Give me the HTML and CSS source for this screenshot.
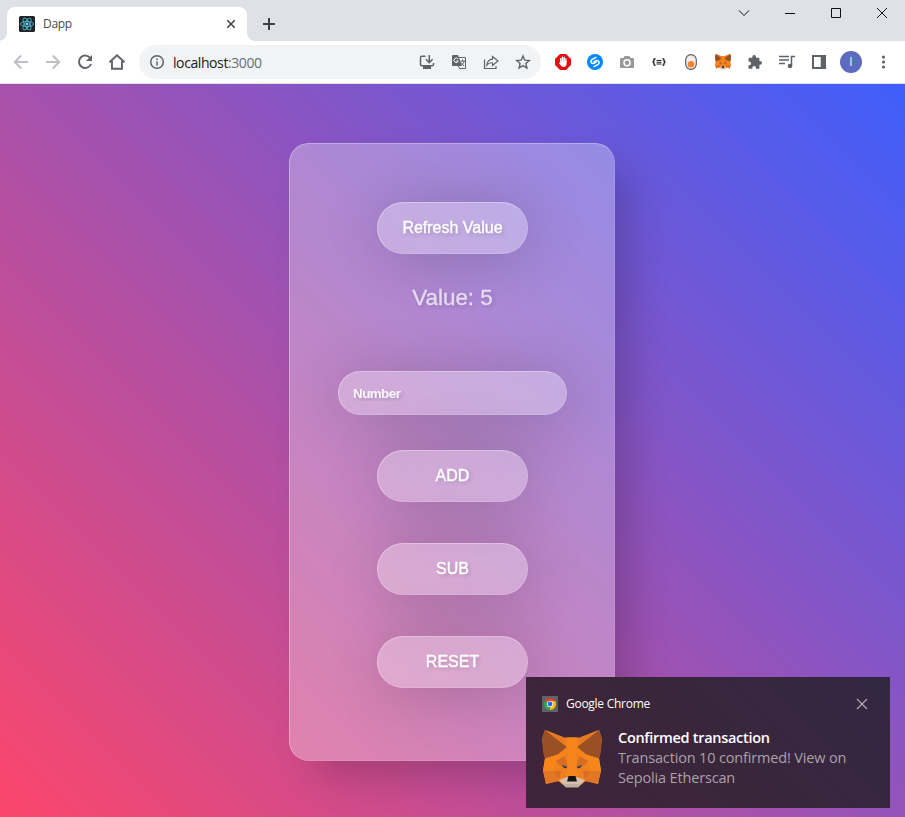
FILE: index.html
```html
<!DOCTYPE html>
<html lang="en">
<head>
<meta charset="utf-8">
<title>Dapp</title>
<link rel="stylesheet" href="styles.css">
</head>
<body>
<svg class="defs" width="0" height="0" aria-hidden="true">
  <symbol id="fox" viewBox="0 0 60 58">
    <path fill="#f0801f" d="M3 0 22 7.500H38L57 0 60 9 57 29 59 40 56 54 44 51 36 57H24L16 51 4 54 1 40 3 29 0 9Z"/>
    <path fill="#995024" d="M3 0 25 17 16 24.500 3 28.500 1 22 0 9ZM57 0 35 17 44 24.500 57 28.500 59 22 60 9Z"/>
    <path fill="#e67a22" d="M3 0 22 7.500 25 17ZM57 0 38 7.500 35 17Z"/>
    <path fill="#f6851b" d="M3 28.500 16 24.500 25 17 24 30 14 31 12 41H1ZM57 28.500 44 24.500 35 17 36 30 46 31 48 41H59Z"/>
    <path fill="#e27625" d="M1 41H12L17 51 4 54ZM59 41H48L43 51 56 54Z"/>
    <path fill="#d96b23" d="M13.500 31 23 26 26 38 18 35ZM46.500 31 37 26 34 38 42 35ZM12 41H19L17 50ZM48 41H41L43 50Z"/>
    <path fill="#f6851b" d="M25 7.500H35V17L33.500 30 36.500 46H23.500L26.500 30 25 17Z"/>
    <path fill="#35434c" d="M19.500 35 25 36.500 24.500 38.500 21.500 37.800ZM40.500 35 35 36.500 35.500 38.500 38.500 37.800Z"/>
    <path fill="#d7c1b3" d="M17 50 26 47 34 47 43 50 36 57H24Z"/>
    <path fill="#c0ad9e" d="M20.500 54H39.500L36 57.500H24Z"/>
    <path fill="#161616" d="M26.500 46H33.500L35 51.500H25Z"/>
  </symbol>
</svg>

<header class="browser">
  <div class="titlebar">
    <div class="tab">
      <svg class="favicon" viewBox="0 0 16 16"><rect width="16" height="16" rx="1.500" fill="#20232a"/><g fill="none" stroke="#4fb4cc" stroke-width=".9"><ellipse cx="8" cy="8" rx="6.600" ry="2.500"/><ellipse cx="8" cy="8" rx="6.600" ry="2.500" transform="rotate(60 8 8)"/><ellipse cx="8" cy="8" rx="6.600" ry="2.500" transform="rotate(120 8 8)"/></g><circle cx="8" cy="8" r="1.400" fill="#61dafb"/></svg>
      <span class="tab-title">Dapp</span>
      <svg class="tab-close" viewBox="0 0 16 16"><path d="M4.300 4.300 11.700 11.700M11.700 4.300 4.300 11.700"/></svg>
    </div>
    <svg class="new-tab" viewBox="0 0 16 16"><path d="M8 2V14M2 8H14"/></svg>
    <div class="window-buttons">
      <svg viewBox="0 0 12 12"><path d="M1 3.500 6 8.500 11 3.500"/></svg>
      <svg viewBox="0 0 12 12"><path d="M1 6.500H11" shape-rendering="crispEdges"/></svg>
      <svg viewBox="0 0 12 12"><path d="M1.500 1.500H10.500V10.500H1.500Z"/></svg>
      <svg viewBox="0 0 12 12"><path d="M1 1 11 11M11 1 1 11"/></svg>
    </div>
  </div>
  <div class="toolbar">
    <div class="nav">
      <svg class="line off" viewBox="0 0 18 18"><path d="M16 9H3M9.200 2.500 2.700 9 9.200 15.500"/></svg>
      <svg class="line off" viewBox="0 0 18 18"><path d="M2 9H15M8.800 2.500 15.300 9 8.800 15.500"/></svg>
      <svg class="line" viewBox="0 0 18 18"><path d="M14.500 5.500A6.200 6.200 0 1 0 15 11"/><path class="solid" d="M16 2V8H10Z"/></svg>
      <svg class="line" viewBox="0 0 18 18"><path d="M1.500 9.300 9 2.200 16.500 9.300M4 8V15.700H14V8"/></svg>
    </div>
    <div class="omnibox">
      <svg class="info" viewBox="0 0 16 16"><circle cx="8" cy="8" r="6.300"/><path d="M8 7.200V11.500M8 4.500V6"/></svg>
      <span class="url">localhost<span class="port">:3000</span></span>
      <div class="page-actions">
        <svg class="thin" viewBox="0 0 16 16"><path stroke-width="1.500" d="M6.500 2.200H3Q1.500 2.200 1.500 3.700V10.300Q1.500 11.800 3 11.800H13Q14.500 11.800 14.500 10.300V9M10.300 1V8M7 5.300 10.300 8.600 13.600 5.300"/><path class="solid" d="M4 12H12V15H4Z"/></svg>
        <svg viewBox="0 0 16 16"><path fill="#5f6368" d="M1.500 1H7L11 12H1.500Q1 12 1 11V1.500Z"/><path fill="none" stroke="#5f6368" d="M8 3.500H14.500V14.500H8.500L7.500 12M9.500 7H14M11.500 5.500V7M13.300 7Q12.500 10 10.500 11M10 8.500 13 12"/><path fill="none" stroke="#fff" d="M7 5A2.200 2.200 0 1 0 7.300 7H5.300"/></svg>
        <svg class="thin" viewBox="0 0 16 16"><path d="M1.500 5.500V14.500H13V12M9.500 2.500 15 7 9.500 11.500V8.800Q6 8.500 3.800 11.200 4.500 5.700 9.500 5.200Z"/></svg>
        <svg class="star" viewBox="0 0 16 16"><path d="M8 2 9.800 6.200 14.300 6.600 10.900 9.500 11.900 14 8 11.600 4.100 14 5.100 9.500 1.700 6.600 6.200 6.200Z"/></svg>
      </div>
    </div>
    <div class="extensions">
      <svg viewBox="0 0 16 16"><path fill="#e70d12" d="M5 0H11L16 5V11L11 16H5L0 11V5Z"/><path fill="none" stroke="#fff" stroke-width="1.400" stroke-linecap="round" d="M5.800 8V4.500M7.500 7V3.300M9.200 7V3.500M10.900 8V5"/><path fill="#fff" d="M5.100 7H11.600V10Q11 13 8.500 13 6.500 13 3.800 8.800 4.300 8 5.500 9Z"/></svg>
      <svg viewBox="0 0 16 16"><circle cx="8" cy="8" r="8" fill="#08f"/><path fill="none" stroke="#fff" stroke-width="1.500" stroke-linecap="round" d="M9 3.400 5.300 5.300C2.800 6.800 4 10.300 7 9.300L9 8.100M7 12.600 10.700 10.700C13.200 9.200 12 5.700 9 6.700L7 7.900"/></svg>
      <svg viewBox="0 0 16 16"><path fill="#999" d="M2 4H4.500L5.500 2H10.500L11.500 4H14Q15 4 15 5V13Q15 14 14 14H2Q1 14 1 13V5Q1 4 2 4Z"/><circle cx="8" cy="8.800" r="3" fill="#999" stroke="#fff" stroke-width="1.500"/></svg>
      <svg viewBox="0 0 16 16"><path fill="none" stroke="#222" stroke-width="1.400" d="M4.500 4.700H4Q3 4.700 3 6 3 8 1.500 8 3 8 3 10 3 11.300 4 11.300H4.500M11.500 4.700H12Q13 4.700 13 6 13 8 14.500 8 13 8 13 10 13 11.300 12 11.300H11.500"/><path stroke="#222" stroke-width="1" d="M5.500 6.500H10.500M5.500 8.300H10.500M5.500 10H10.500"/></svg>
      <svg viewBox="0 0 16 16"><rect x="2.700" y=".6" width="10.600" height="14.800" rx="5.300" fill="#eee" stroke="#555" stroke-width="1.100"/><circle cx="8" cy="10.300" r="3.300" fill="#f58233"/></svg>
      <svg viewBox="0 0 16 16"><use href="#fox" width="16" height="15.500"/></svg>
      <svg viewBox="0 0 16 16"><path fill="#5f6368" d="M2 3.800H5.300V3Q5.300 1 7.200 1 9 1 9 3V3.800H12.400V7H13Q15 7 15 9 15 10.800 13 10.800H12.400V14.700H9V14Q9 12 7.200 12 5.300 12 5.300 14V14.700H1.500V11.300H2Q4 11.300 4 9.400 4 7.500 2 7.500H1.500V4.500Z"/></svg>
      <svg class="line queue" viewBox="0 0 16 16"><path d="M0 2.500H10M0 6H10M0 9.500H6M12.500 12V2.500H16"/><circle class="solid" cx="11" cy="12" r="2.300"/></svg>
      <svg viewBox="0 0 16 16"><path fill="#5f6368" fill-rule="evenodd" d="M1 1H15V15H1ZM3 3V13H9.700V3Z"/></svg>
      <span class="avatar">I</span>
      <svg viewBox="0 0 16 16"><g fill="#5f6368"><circle cx="8.500" cy="3" r="1.600"/><circle cx="8.500" cy="8" r="1.600"/><circle cx="8.500" cy="13" r="1.600"/></g></svg>
    </div>
  </div>
</header>

<main class="page">
  <form class="card">
    <button class="glass action" type="button">Refresh Value</button>
    <p class="value">Value: 5</p>
    <input class="glass number" type="text" placeholder="Number">
    <button class="glass action" type="button">ADD</button>
    <button class="glass action" type="button">SUB</button>
    <button class="glass action" type="button">RESET</button>
  </form>
</main>

<aside class="toast">
  <div class="toast-head">
    <svg class="chrome" viewBox="0 0 16 16"><rect width="16" height="16" fill="#5f6368"/><path fill="#ea4335" d="M8 8 2.800 5A6 6 0 0 1 13.200 5Z"/><path fill="#fbbc04" d="M8 8V5H13.200A6 6 0 0 1 8 14Z"/><path fill="#34a853" d="M8 8V14A6 6 0 0 1 2.800 5Z"/><circle cx="8" cy="8" r="3.100" fill="#fff"/><circle cx="8" cy="8" r="2.400" fill="#1a73e8"/></svg>
    <span class="app-name">Google Chrome</span>
    <svg class="toast-close" viewBox="0 0 12 12"><path d="M1 1 11 11M11 1 1 11"/></svg>
  </div>
  <div class="toast-body">
    <svg class="toast-fox" viewBox="0 0 60 58"><use href="#fox" width="60" height="58"/></svg>
    <div class="toast-text">
      <div class="toast-title">Confirmed transaction</div>
      <div class="message">Transaction 10 confirmed! View on</div>
      <div class="message">Sepolia Etherscan</div>
    </div>
  </div>
</aside>
</body>
</html>
```
FILE: styles.css
```css
* { box-sizing: border-box; }
body {
  margin: 0;
  height: 817px;
  display: flex;
  flex-direction: column;
  position: relative;
  overflow: hidden;
  font-family: "Open Sans", "Noto Sans", sans-serif;
}
.defs { position: absolute; }
svg { display: block; flex: none; }

.browser { flex: none; }
.titlebar {
  height: 41px;
  background: #dee1e6;
  display: flex;
  padding-left: 7px;
}
.tab {
  position: relative;
  width: 240px;
  height: 34px;
  margin-top: 7px;
  padding: 0 8px 0 12px;
  background: #fff;
  border-radius: 8px 8px 0 0;
  display: flex;
  align-items: center;
}
.tab::before, .tab::after {
  content: "";
  position: absolute;
  bottom: 0;
  width: 8px;
  height: 8px;
}
.tab::before { left: -8px; background: radial-gradient(circle at 0 0, transparent 7.5px, #fff 8px); }
.tab::after { right: -8px; background: radial-gradient(circle at 100% 0, transparent 7.5px, #fff 8px); }
.favicon { width: 16px; height: 16px; }
.tab-title { flex: 1; margin-left: 8px; font-size: 12px; line-height: 16px; padding-bottom: 1px; letter-spacing: -.3px; color: #45494d; }
.tab-close { width: 16px; height: 16px; fill: none; stroke: #3c4043; stroke-width: 1.5; }
.new-tab { width: 16px; height: 16px; margin: 16px 0 0 14px; fill: none; stroke: #3c4043; stroke-width: 2; }
.window-buttons { margin: 7px 17px 0 auto; display: flex; gap: 34px; height: 12px; }
.window-buttons svg { width: 12px; height: 12px; fill: none; stroke: #111; stroke-width: 1; }

.toolbar {
  height: 43px;
  background: #fff;
  border-bottom: 1px solid #dfe1e5;
  display: flex;
  align-items: center;
  padding-left: 5px;
}
.nav { display: flex; width: 134px; }
.nav svg { width: 18px; height: 18px; margin: 0 7px; }
.line { fill: none; stroke: #5f6368; stroke-width: 1.9; }
.line.off { stroke: #bdbfc2; }
.line.queue { stroke-width: 1.5; }
.solid { fill: #5f6368; stroke: none !important; }
.omnibox {
  width: 402px;
  height: 34px;
  padding: 0 2px 0 10px;
  border-radius: 17px;
  background: #f1f3f4;
  display: flex;
  align-items: center;
}
.info { width: 16px; height: 16px; fill: none; stroke: #5f6368; stroke-width: 1.5; }
.url { flex: 1; margin-left: 8px; font-size: 14px; letter-spacing: -.41px; color: #202124; }
.port { color: #6b7075; }
.page-actions { display: flex; }
.page-actions svg { width: 16px; height: 16px; margin: 0 8px; }
.thin { fill: none; stroke: #5f6368; stroke-width: 1.2; }
.star { fill: none; stroke: #5f6368; stroke-width: 1.4; }
.extensions { display: grid; grid-template-columns: repeat(11, 32px); margin-left: 6px; place-items: center; }
.extensions svg { width: 16px; height: 16px; }
.avatar {
  width: 22px;
  height: 22px;
  border-radius: 50%;
  background: #5c6bc0;
  color: #e3e5f5;
  font: 12px/22px Roboto, sans-serif;
  text-align: center;
}

.page {
  flex: 1;
  display: flex;
  justify-content: center;
  align-items: flex-start;
  padding-top: 59px;
  background: linear-gradient(45deg, #fc466b, #3f5efb);
}
.card {
  width: 326px;
  height: 618px;
  margin-right: 1px;
  padding: 58px 47px 48px 48px;
  display: flex;
  flex-direction: column;
  align-items: center;
  border: 1px solid rgba(255, 255, 255, .1);
  border-top-color: rgba(255, 255, 255, .3);
  border-left-color: rgba(255, 255, 255, .3);
  border-radius: 20px;
  background: rgba(255, 255, 255, .3);
  box-shadow: 20px 20px 40px -6px rgba(0, 0, 0, .2);
}
.glass {
  flex: none;
  margin: 0;
  position: relative;
  border: 1px solid rgba(255, 255, 255, .12);
  border-top-color: rgba(255, 255, 255, .3);
  border-left-color: rgba(255, 255, 255, .3);
  border-radius: 5000px;
  background: rgba(255, 255, 255, .3);
  backdrop-filter: blur(5px);
  box-shadow: 4px 4px 60px rgba(0, 0, 0, .2);
  color: #fff;
  font-family: "Liberation Sans", Arial, sans-serif;
  text-shadow: 2px 2px 4px rgba(0, 0, 0, .2);
}
.action { width: 151px; height: 52px; font-size: 16px; font-weight: 500; margin-bottom: 41px; -webkit-text-stroke: .35px #fff; }
.value {
  margin: -11px 0 60px;
  height: 27px;
  color: #fff;
  opacity: .7;
  font: 500 22.4px/27px "Liberation Sans", Arial, sans-serif;
  text-shadow: 2px 2px 4px rgba(0, 0, 0, .2);
  -webkit-text-stroke: .3px #fff;
}
.number { width: 229px; height: 44px; padding: 0 14px; margin-bottom: 35px; font-size: 13.33px; font-weight: 700; letter-spacing: -.5px; }
.number::placeholder { color: #fff; opacity: .9; }

.toast {
  position: absolute;
  left: 526px;
  top: 677px;
  width: 364px;
  height: 131px;
  padding: 18px 16px;
  background: linear-gradient(45deg, #40243a, #39263b 50%, #332744);
}
.toast-head { height: 17px; display: flex; align-items: center; }
.chrome { width: 16px; height: 16px; }
.app-name { flex: 1; margin-left: 8px; color: #fff; font-size: 12px; letter-spacing: -.27px; }
.toast-close { width: 12px; height: 12px; margin-right: 6px; fill: none; stroke: #b5afb7; stroke-width: 1.1; }
.toast-body { display: flex; margin-top: 16px; }
.toast-fox { width: 60px; height: 58px; margin-top: 2px; }
.toast-text { margin-left: 16px; font-size: 14.5px; line-height: 20px; white-space: nowrap; }
.toast-title { color: #fff; font-weight: 600; letter-spacing: -.3px; }
.message { color: #a9a1aa; letter-spacing: -.16px; }
```
